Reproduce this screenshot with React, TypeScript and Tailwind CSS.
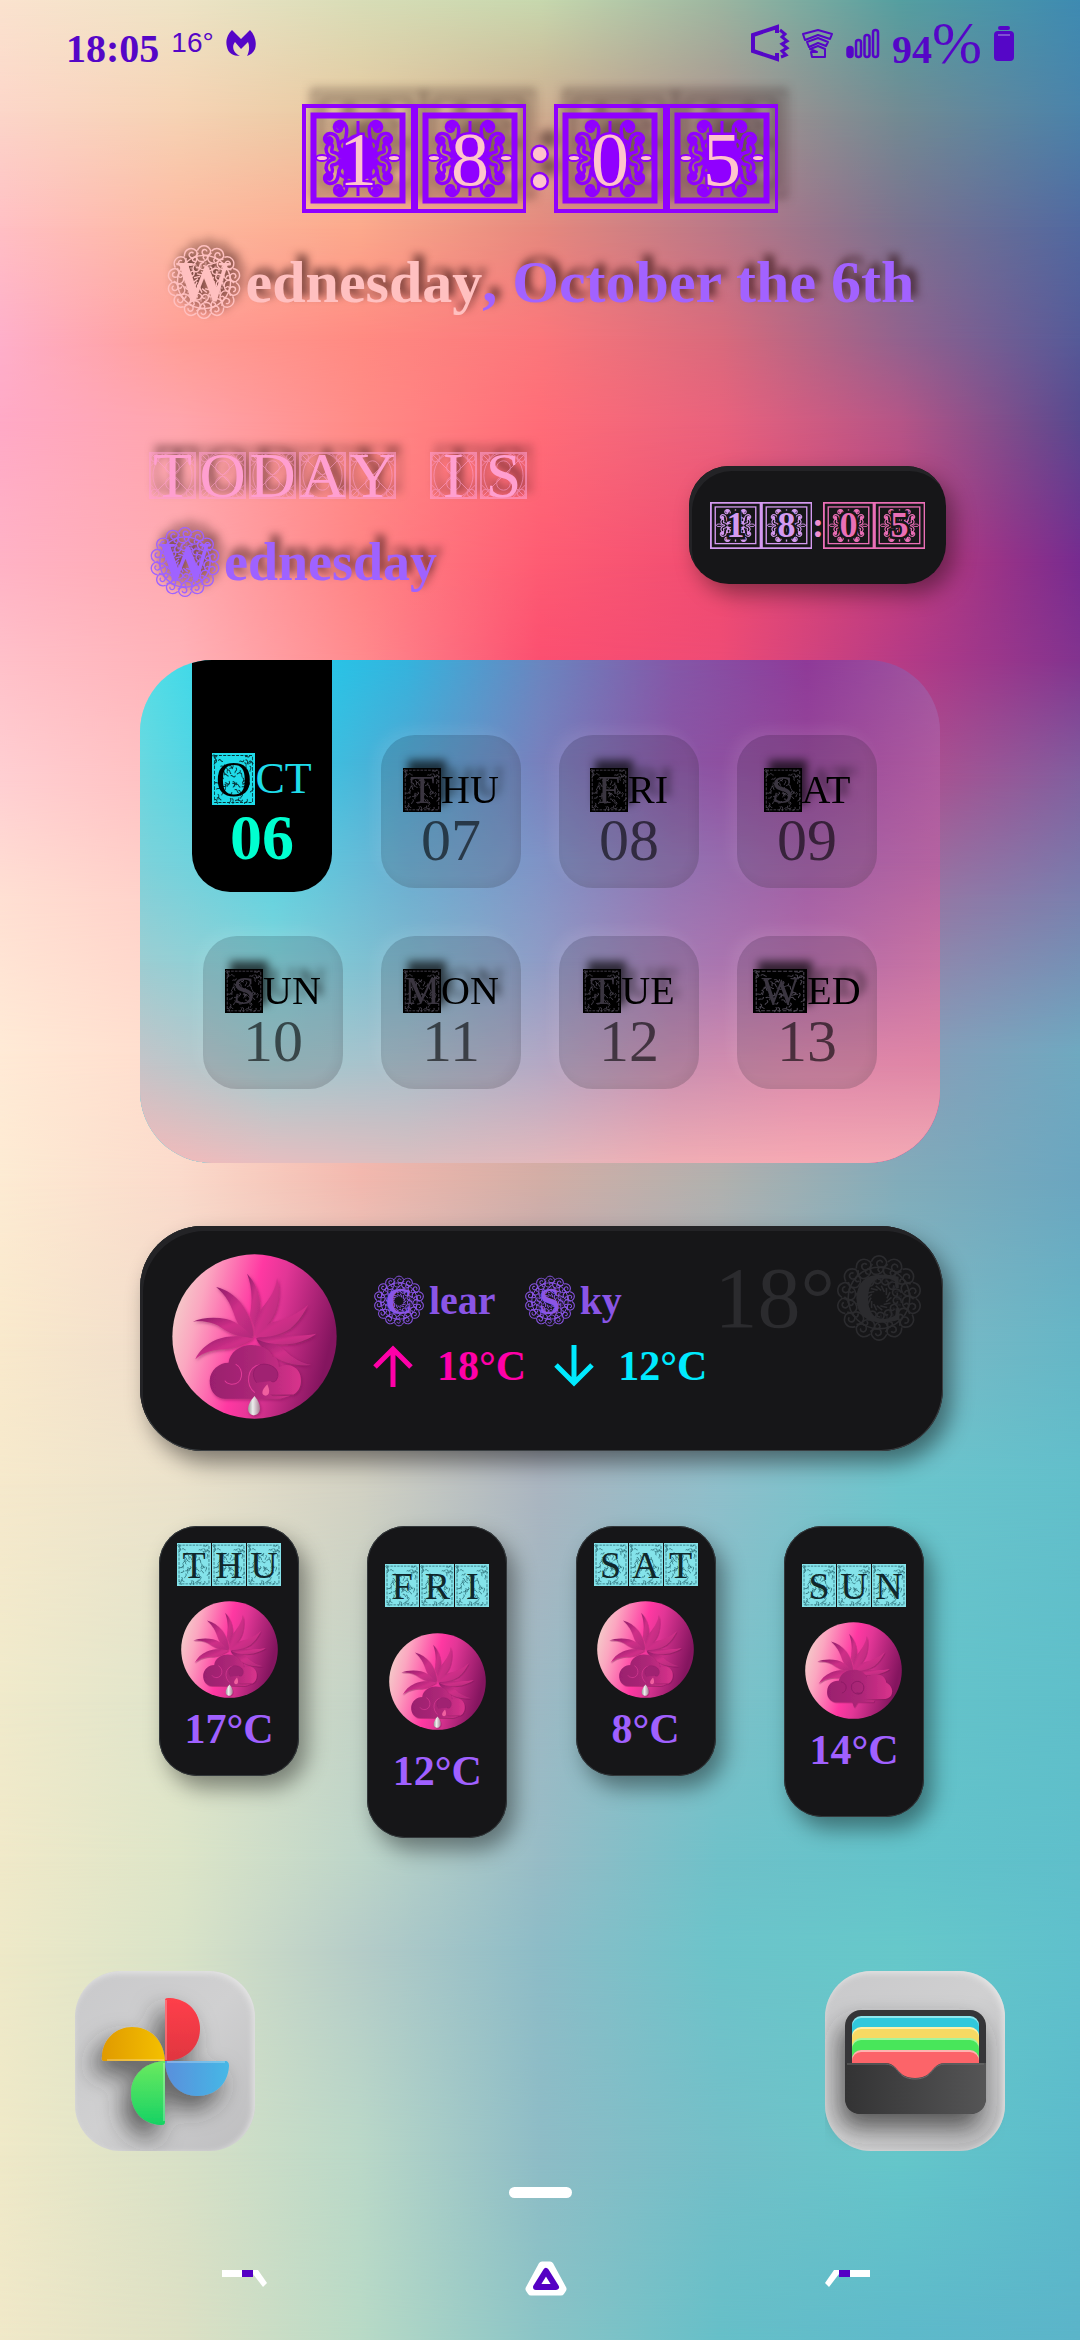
import { useId } from "react";
import type { ReactNode } from "react";

const SERIF = "font-['Liberation_Serif',serif]";

type Mesh = { stops: number[]; rows: string[] };

const wallpaper: Mesh = {
  stops: [0, 4.8, 9.7, 14.5, 18, 24, 28.2, 33.3, 38.5, 45, 50.4, 57.3, 63.2, 72.6, 79.5, 83.3, 91.9, 100],
  rows: [
    "#fbe3cf,#eee4c6,#d8ddb7,#c7d8ae,#9cb6a0,#559fa0,#3e8bb2",
    "#fcd6c9,#f6d3b4,#e6c9a0,#cfae90,#ad9590,#728b93,#4a83aa",
    "#ffbfc4,#fdb9a0,#fca98c,#e6897e,#bb7888,#7b728f,#5169a0",
    "#feafca,#ff9e96,#ff8a82,#fb777b,#d96a7c,#92628e,#555a98",
    "#ffa9c6,#ffa5ac,#ff8b86,#ff6d78,#e9627d,#b55587,#58498f",
    "#ffb2c5,#ffaab0,#ff8485,#fe5c73,#f04c72,#c23c7d,#772b90",
    "#ffc0c9,#ffb2b8,#ff8a8d,#fb4f70,#ee4b75,#b63b86,#82338f",
    "#ffcfd2,#ffbfc0,#ff9a9a,#e86080,#c84b80,#b0508f,#81609f",
    "#ffe0d3,#ffcfc8,#f9b0a8,#d88a95,#b57595,#9a76a3,#7a80ae",
    "#ffead6,#ffdccd,#f5b8b0,#d8a0a0,#b898a8,#8a9cb8,#6fa9c0",
    "#fdebd3,#fbdacb,#f2b8ae,#d3aea6,#b1b1ae,#82acba,#6ba6c0",
    "#f9e9cc,#f0dccb,#e2cdc5,#b5abb8,#9fafbd,#7db9c5,#66b6c6",
    "#f6e9cc,#ebe2cb,#d2d1c3,#abb5c0,#8fbfcb,#6cc5cc,#62bfcb",
    "#f0eacb,#dfe4cb,#c4d3c6,#9db9c4,#7dc1c9,#66c4ca,#5fbfca",
    "#f0e9c9,#dde5c8,#bdd5c9,#97bcc6,#6fc1c9,#63c3ca,#5fbfcb",
    "#eee9c8,#d9e3c8,#b5ccc8,#8dbcc7,#6cc4ca,#66c8ca,#5fc0cc",
    "#efe9c8,#d8e1c7,#bad8c8,#8ebcc6,#74bfc8,#65c7ca,#5cbbcb",
    "#f0e8c8,#dde0c4,#b8dac6,#8ac4c6,#66bfc8,#5eb9ca,#5bb4c9",
  ],
};

const cardMesh: Mesh = {
  stops: [0, 20, 40, 60, 80, 100],
  rows: [
    "#56dfe6,#1fd0ee,#34b4de,#6a86c0,#8458a8,#8f3a99,#a157a0",
    "#68d8e0,#30cfe8,#4fa8d3,#7880bd,#8a55a5,#954699,#ae5a9f",
    "#7dd2da,#5bd3e2,#6aaed2,#7f93c6,#9173b2,#a05ea5,#b463a0",
    "#9ccdd2,#80d3da,#7eb8ce,#8f9cc6,#a57bb4,#b26aa8,#c873a3",
    "#c4c4c8,#a3cbcf,#a9bfcb,#b3a8c4,#c98fb1,#dc88ab,#e085a5",
    "#f5b9b9,#e5bec0,#d9bec0,#e2b8bc,#f0adb4,#f6a9b3,#f2aab5",
  ],
};

/* Soft two-way gradient: each colour row fades in over the one above it. */
function MeshGradient({ mesh }: { mesh: Mesh }) {
  return (
    <div aria-hidden="true" className="absolute inset-0 -z-10 overflow-hidden">
      {mesh.rows.map((row, i) => {
        const mask =
          i === 0
            ? undefined
            : `linear-gradient(to bottom, transparent ${mesh.stops[i - 1]}%, black ${mesh.stops[i]}%)`;
        return (
          <div
            key={i}
            className="absolute inset-0"
            style={{ backgroundImage: `linear-gradient(to right, ${row})`, maskImage: mask }}
          />
        );
      })}
    </div>
  );
}

/* ---------- ornaments ---------- */

function Scrolls({ thin }: { thin: boolean }) {
  return (
    <g fill="none" stroke="currentColor" strokeLinecap="round" strokeWidth={thin ? 2.5 : 3.5}>
      <path d="M61 47C76 40 64 30 68 21C71 13 82 17 79 24C77 28 71 26 73 22" />
      <path d="M64 50C81 46 72 35 79 30C87 25 93 34 87 38C83 40 80 35 84 33" />
      <path d="M60 42C61 32 74 33 75 41C74 47 67 46 68 41" />
      <path d="M74 52C78 44 84 50 82 44C80 38 86 36 88 44C88 49 84 52 80 53" />
      <circle cx="74" cy="20" r="3" fill="currentColor" />
      <circle cx="85" cy="35" r="2" fill="currentColor" />
      <circle cx="72" cy="48" r="2" fill="currentColor" />
    </g>
  );
}

function DigitTile({ digit, mini = false }: { digit: string; mini?: boolean }) {
  return (
    <span
      className={
        mini
          ? "relative flex h-[47px] w-[51px] items-center justify-center"
          : "relative flex h-[109px] w-[112px] items-center justify-center"
      }
    >
      <svg viewBox="0 0 112 109" preserveAspectRatio="none" className="absolute inset-0 size-full" aria-hidden="true">
        <rect x="2" y="2" width="109" height="105" fill="none" stroke="currentColor" strokeWidth="4" />
        <rect x="11.500" y="11.500" width="89" height="85" fill="none" stroke="currentColor" strokeWidth={mini ? 3 : 6} />
        <g transform="translate(0 1)">
          <Scrolls thin={mini} />
          <g transform="matrix(-1 0 0 1 112 0)"><Scrolls thin={mini} /></g>
          <g transform="matrix(1 0 0 -1 0 107)"><Scrolls thin={mini} /></g>
          <g transform="matrix(-1 0 0 -1 112 107)"><Scrolls thin={mini} /></g>
          <path d="M56 16V91" stroke="currentColor" strokeWidth="3" />
          {!mini && <ellipse cx="56" cy="53" rx="17" ry="24" fill="currentColor" />}
          <ellipse cx="92" cy="53" rx="6" ry="3" fill={mini ? "none" : "#ffc4cc"} stroke="currentColor" strokeWidth="2" />
          <ellipse cx="20" cy="53" rx="6" ry="3" fill={mini ? "none" : "#ffc4cc"} stroke="currentColor" strokeWidth="2" />
        </g>
      </svg>
      <span
        className={
          mini
            ? "relative text-[36px] leading-none font-bold [-webkit-text-stroke:5px_#161618] [paint-order:stroke_fill]"
            : "relative text-[76px] leading-none text-[#ffc4cc] [-webkit-text-stroke:5px_#9000ff] [paint-order:stroke_fill]"
        }
      >
        {digit}
      </span>
    </span>
  );
}

function Medallion({ letter, size }: { letter: string; size: "sm" | "md" | "lg" | "ghost" }) {
  const box = {
    sm: "size-[52px] text-[38px]",
    md: "size-[72px] text-[54px]",
    lg: "size-[76px] text-[56px]",
    ghost: "size-[88px] text-[72px]",
  }[size];
  const petals = Array.from({ length: 14 }, (_, i) => (i * 360) / 14);
  return (
    <span className={`relative flex shrink-0 items-center justify-center ${box}`}>
      <svg viewBox="0 0 80 80" className="absolute inset-0 size-full" fill="none" stroke="currentColor" strokeWidth="1.500" aria-hidden="true">
        {petals.map((a) => (
          <g key={a} transform={`rotate(${a} 40 40)`}>
            <path d="M33 7C36 0 44 0 47 7C47 13 39 14 38 9C38 5 43 5 43 8" />
            <path d="M34 9C30 15 34 20 40 18C45 16 45 11 41 12C38 13 39 16 41 16" />
            <path d="M40 19C34 21 34 27 39 27C43 26 42 22 39 23M37 29L42 33" />
          </g>
        ))}
        <circle cx="40" cy="40" r="28" />
        <circle cx="40" cy="40" r="18" strokeDasharray="2 3" strokeWidth="6" opacity=".45" />
      </svg>
      <span className="relative leading-none font-bold">{letter}</span>
    </span>
  );
}

const specks = Array.from({ length: 54 }, (_, i) => ({
  x: 6 + ((i * 61.8) % 88),
  y: 6 + ((i * i * 7 + i * 29) % 89),
  t: (i * 47) % 180,
}));

/* A letter on a solid, speckled block. */
function BlockLetter({ children, className, letter, ink }: { children: ReactNode; className: string; letter: string; ink: string }) {
  return (
    <span className={`relative flex items-center justify-center ${className}`}>
      <svg viewBox="0 0 100 100" preserveAspectRatio="none" className="absolute inset-0 size-full" aria-hidden="true">
        <rect width="100" height="100" fill="currentColor" />
        <rect x="6" y="5" width="88" height="90" fill="none" stroke={ink} strokeWidth="2" strokeDasharray="7 3" />
        {specks.map((s, i) => (
          <path
            key={i}
            d="M-5 0Q-2 -4 1 -1T6 1"
            transform={`translate(${s.x} ${s.y}) rotate(${s.t})`}
            fill="none"
            stroke={ink}
            strokeWidth="2"
          />
        ))}
      </svg>
      <span className={`relative leading-none ${letter}`}>{children}</span>
    </span>
  );
}

function GridLetter({ children }: { children: string }) {
  return (
    <span className="relative flex size-[47px] items-center justify-center">
      <svg viewBox="0 0 48 48" className="absolute inset-0 size-full opacity-60" fill="none" stroke="currentColor" aria-hidden="true">
        <rect x="1" y="1" width="46" height="46" strokeWidth="2" />
        <path d="M1 1L47 47M47 1L1 47M15 1L1 15M33 1L47 15M1 33L15 47M47 33L33 47" />
        <ellipse cx="24" cy="24" rx="20" ry="23" />
        <circle cx="24" cy="16" r="7" />
        <circle cx="24" cy="32" r="7" />
        <circle cx="6" cy="6" r="4" />
        <circle cx="42" cy="6" r="4" />
        <circle cx="6" cy="42" r="4" />
        <circle cx="42" cy="42" r="4" />
      </svg>
      <span className="relative text-[64px] leading-[47px]">{children}</span>
    </span>
  );
}

/* ---------- weather art ---------- */

const petals = [
  "M452 372C420 365 395 350 375 330C350 308 320 295 290 296C300 320 330 345 365 360C395 373 425 376 452 372Z",
  "M467 280C430 288 390 285 350 285C325 285 300 288 288 294C320 312 370 315 405 308C435 300 452 292 467 280Z",
  "M443 194C420 215 385 235 350 243C315 250 295 270 288 290C320 292 360 285 390 265C415 245 430 220 443 194Z",
  "M262 102C275 135 280 175 270 225L285 262C308 220 308 150 262 102Z",
  "M351 114C348 145 330 175 305 205C288 230 280 255 285 288C310 270 340 240 350 200C358 170 358 140 351 114Z",
  "M170 141C200 165 215 195 228 235C240 265 260 280 280 288C282 260 270 225 245 190C225 165 200 148 170 141Z",
  "M101 244C130 240 165 245 190 265C220 285 250 292 280 292C260 268 235 245 200 236C165 229 125 232 101 244Z",
  "M108 356C130 335 165 325 200 325C230 322 255 308 280 294C250 285 205 283 170 298C140 312 120 330 108 356Z",
];

function WeatherArt({ className, dry = false }: { className: string; dry?: boolean }) {
  const id = useId();
  return (
    <svg viewBox="39 43 490 490" className={className} role="img" aria-label={dry ? "Cloudy sun" : "Sun with rain cloud"}>
      <defs>
        <linearGradient id={`${id}b`} x1="0" y1=".35" x2="1" y2=".6">
          <stop offset="0" stopColor="#f4cbc9" />
          <stop offset=".15" stopColor="#fba6c0" />
          <stop offset=".45" stopColor="#ff38a2" />
          <stop offset=".6" stopColor="#e23696" />
          <stop offset=".95" stopColor="#84155f" />
        </linearGradient>
        <linearGradient id={`${id}p`} x1="0" y1="0" x2="1" y2="1">
          <stop offset="0" stopColor="#8d1c68" />
          <stop offset=".5" stopColor="#cf2f88" />
          <stop offset="1" stopColor="#b02a7a" />
        </linearGradient>
        <linearGradient id={`${id}c`}>
          <stop offset="0" stopColor="#9a1f6e" />
          <stop offset=".5" stopColor="#ab2677" />
          <stop offset="1" stopColor="#d9328c" />
        </linearGradient>
        <linearGradient id={`${id}d`}>
          <stop offset="0" stopColor="#9a9a9a" />
          <stop offset=".4" stopColor="#eeeeee" />
          <stop offset="1" stopColor="#a77f95" />
        </linearGradient>
        <filter id={`${id}s`} x="-10%" y="-10%" width="125%" height="125%">
          <feDropShadow dx="3" dy="4" stdDeviation="4" floodColor="#6d0f4c" floodOpacity=".5" />
        </filter>
      </defs>
      <circle cx="284" cy="288" r="244" fill={`url(#${id}b)`} />
      <g fill={`url(#${id}p)`} filter={`url(#${id}s)`}>
        {petals.map((d) => <path key={d} d={d} />)}
      </g>
      {dry ? (
        <g filter={`url(#${id}s)`}>
          <path fill={`url(#${id}c)`} d="M190 448C160 440 148 415 151 390C155 355 180 338 210 340C218 300 255 282 290 284C325 286 345 305 350 325C395 290 445 310 450 350C490 370 490 425 445 432L330 434L390 440L385 448H305L288 476L278 448Z" />
          <path d="M220 345C255 350 255 395 225 402M330 400C300 420 265 395 275 360C290 335 325 338 335 365C342 395 318 410 300 400" fill="none" stroke="#871862" strokeWidth="4" />
        </g>
      ) : (
        <g filter={`url(#${id}s)`}>
          <path fill={`url(#${id}c)`} d="M195 473C165 470 150 445 151 418C153 388 178 366 207 366C210 335 240 313 275 313C305 314 330 325 338 348C350 346 356 365 356 380C375 366 408 372 418 398C428 425 418 452 400 460H330L340 466L390 464L360 473Z" />
          <path d="M228 370C256 385 250 432 215 430C205 428 198 424 196 419M300 372C262 378 255 430 285 455" fill="none" stroke="#e03b98" strokeWidth="3" />
          <path d="M290 425C270 400 285 368 315 370C345 372 362 395 350 415C346 424 338 424 332 420" fill="#a02272" stroke="#8c1b65" strokeWidth="2" />
          <path d="M322 430C304 448 303 462 317 464C330 462 330 448 322 430Z" fill="#f05f9f" />
          <path d="M284 465C258 495 260 518 281 522C305 520 307 492 284 465Z" fill={`url(#${id}d)`} />
        </g>
      )}
    </svg>
  );
}

/* ---------- status bar ---------- */

function StatusBar() {
  return (
    <header className="flex h-[86px] items-center justify-between px-[66px] text-[#5506c7]">
      <div className="flex items-center gap-3">
        <span className="pt-[12px] text-[40px] leading-none font-bold">18:05</span>
        <span className="font-['Liberation_Sans',sans-serif] text-[28px] leading-none">16°</span>
        <svg viewBox="0 0 30 27" className="h-[27px] w-[30px]" fill="currentColor" aria-hidden="true">
          <path d="M6 0L15 9L24 0C29 5 31 13 29 19C27 23 24 25 21 26C23 22 24 17 22 12L15 19L9 12C5 17 8 23 14 26C7 26 2 23 1 17C-1 10 2 4 6 0Z" />
        </svg>
      </div>
      <div className="flex items-center gap-3">
        <svg viewBox="0 0 40 38" className="h-[38px] w-[40px]" fill="none" stroke="currentColor" strokeWidth="4" aria-hidden="true">
          <path d="M27 9V3L3 11V27L27 35V29" />
          <path d="M30 6L35 10L32 13L37 17L32 20L37 24L32 27L36 31L31 33" strokeWidth="3" />
        </svg>
        <svg viewBox="0 0 32 30" className="h-[30px] w-[32px]" fill="none" stroke="currentColor" strokeWidth="2" strokeLinejoin="round" aria-hidden="true">
          <path d="M3 12L1 6L16 2L30 6L28 11L16 7Z" />
          <path d="M7 19L5 14L16 10L26 14L24 18L16 15Z" />
          <path d="M10 29L9 24H15L8 21L16 18L23 21V29Z" />
        </svg>
        <svg viewBox="0 0 34 31" className="h-[31px] w-[34px]" fill="none" stroke="currentColor" strokeWidth="2.500" aria-hidden="true">
          <rect x="1.500" y="19" width="5" height="10" rx="2.500" fill="currentColor" />
          <rect x="10" y="12" width="5" height="17" rx="2.500" />
          <rect x="18.500" y="7" width="5" height="22" rx="2.500" />
          <rect x="27" y="2" width="5" height="27" rx="2.500" />
        </svg>
        <span className="flex items-baseline">
          <span className="text-[40px] leading-none font-bold">94</span>
          <span className="text-[60px] leading-none">%</span>
        </span>
        <svg viewBox="0 0 20 35" className="h-[35px] w-[20px]" fill="currentColor" aria-hidden="true">
          <rect x="4" width="12" height="4" rx="2" />
          <rect y="5" width="20" height="30" rx="4" />
          <path d="M4 9H16" stroke="#a999dd" />
        </svg>
      </div>
    </header>
  );
}

/* ---------- calendar ---------- */

const days = [
  ["T", "HU", "07"],
  ["F", "RI", "08"],
  ["S", "AT", "09"],
  ["S", "UN", "10"],
  ["M", "ON", "11"],
  ["T", "UE", "12"],
  ["W", "ED", "13"],
];

function DayTile({ day }: { day: string[] }) {
  return (
    <li className="flex h-[153px] flex-col items-center rounded-[34px] bg-[#3a3a44]/18 pt-[33px] shadow-[-6px_-6px_14px_rgba(255,255,255,0.08),inset_-4px_-4px_10px_rgba(0,0,0,0.05)]">
      <span className="flex h-[44px] items-center text-black drop-shadow-[5px_-8px_4px_rgba(0,0,0,0.65)]">
        <BlockLetter className={day[0] === "W" ? "h-[44px] w-[54px]" : "h-[44px] w-[38px]"} letter="text-[40px] text-[#3a3540]" ink="#4b4652">
          {day[0]}
        </BlockLetter>
        <span className="text-[40px] leading-none">{day[1]}</span>
      </span>
      <span className="mt-1 text-[60px] leading-[48px] text-black/60">{day[2]}</span>
    </li>
  );
}

function Calendar() {
  return (
    <section className="relative isolate mx-[140px] mt-[62px] overflow-hidden rounded-[72px] pb-[74px]">
      <MeshGradient mesh={cardMesh} />
      <ul className="grid grid-cols-4 gap-x-[38px] gap-y-[48px] px-[63px] pt-[75px]">
        <li className="-mt-[75px] -mb-1 -ml-[11px] flex w-[140px] flex-col items-center rounded-b-[38px] bg-black pt-[93px]">
          <span className="flex h-[52px] items-center text-[#1fdcea]">
            <BlockLetter className="h-[52px] w-[43px]" letter="text-[50px] text-black" ink="#06353a">O</BlockLetter>
            <span className="text-[44px] leading-none">CT</span>
          </span>
          <span className="mt-[8px] text-[64px] leading-[50px] font-bold text-[#00ffd0]">06</span>
        </li>
        {days.map((d) => <DayTile key={d[2]} day={d} />)}
      </ul>
    </section>
  );
}

/* ---------- weather ---------- */

function CurrentWeather() {
  return (
    <section className="mt-[63px] mr-[137px] ml-[140px] flex h-[225px] items-start rounded-[62px] bg-[#161618] pt-[28px] pr-[20px] pl-[32px] shadow-[8px_12px_22px_rgba(0,0,0,0.45),inset_3px_5px_0_#232326,inset_0_0_0_1px_#3a3f42]">
      <WeatherArt className="size-[165px] shrink-0" />
      <div className="ml-[36px] flex flex-col pt-[20px]">
        <h2 className="flex h-[54px] items-center gap-[28px] text-[40px] leading-none font-bold text-[#8a55e6]">
          <span className="flex items-center gap-1"><Medallion letter="C" size="sm" />lear</span>
          <span className="flex items-center gap-1"><Medallion letter="S" size="sm" />ky</span>
        </h2>
        <p className="mt-[12px] flex h-[52px] items-center text-[42px] leading-none font-bold">
          <svg viewBox="0 0 40 42" className="h-[42px] w-[40px]" fill="none" stroke="#ff00a8" strokeWidth="5" aria-label="High" role="img">
            <path d="M20 42V4M2 22L20 4L38 22" />
          </svg>
          <span className="ml-6 text-[#ff00a8]">18°C</span>
          <svg viewBox="0 0 40 42" className="ml-7 h-[42px] w-[40px]" fill="none" stroke="#00eaff" strokeWidth="5" aria-label="Low" role="img">
            <path d="M20 0V38M2 20L20 38L38 20" />
          </svg>
          <span className="ml-6 text-[#00eaff]">12°C</span>
        </p>
      </div>
      <p className="-ml-[16px] flex flex-1 items-center justify-end text-[86px] leading-[88px] text-[#2b2b2e]">
        18°<Medallion letter="C" size="ghost" />
      </p>
    </section>
  );
}

const forecast = [
  { day: "THU", temp: "17°C", pad: "pt-[17px] pb-[22px]", art: "mt-[15px]", text: "mt-[6px]", dry: false },
  { day: "FRI", temp: "12°C", pad: "pt-[38px] pb-[42px]", art: "mt-[26px]", text: "mt-[16px]", dry: false },
  { day: "SAT", temp: "8°C", pad: "pt-[17px] pb-[22px]", art: "mt-[15px]", text: "mt-[6px]", dry: false },
  { day: "SUN", temp: "14°C", pad: "pt-[38px] pb-[42px]", art: "mt-[15px]", text: "mt-[6px]", dry: true },
];

function Forecast() {
  return (
    <ul className="mt-[75px] mr-[156px] ml-[159px] flex h-[311px] items-start justify-between">
      {forecast.map((f) => (
        <li
          key={f.day}
          className={`flex w-[140px] flex-col items-center rounded-[38px] bg-[#161618] shadow-[8px_12px_22px_rgba(0,0,0,0.42),inset_0_0_0_1px_#33383b] ${f.pad}`}
        >
          <span className="flex gap-px text-[#84e3ea]">
            {f.day.split("").map((c) => (
              <BlockLetter key={c} className="h-[43px] w-[34px]" letter="text-[38px] text-[#10282c]" ink="#2d6f78">{c}</BlockLetter>
            ))}
          </span>
          <WeatherArt className={`size-[97px] ${f.art}`} dry={f.dry} />
          <span className={`text-[42px] leading-[50px] font-bold text-[#a060ff] ${f.text}`}>{f.temp}</span>
        </li>
      ))}
    </ul>
  );
}

/* ---------- dock ---------- */

const dockButton =
  "size-[180px] rounded-[46px] bg-linear-to-br from-[#c9c9cb] via-[#d0d0d1] to-[#bdbdbf] shadow-[inset_-2px_2px_6px_#e6e6e6]";

function PhotosIcon() {
  return (
    <svg viewBox="0 0 180 180" className="size-full" aria-hidden="true">
      <defs>
        <linearGradient id="ph-y"><stop stopColor="#e09a00" /><stop offset="1" stopColor="#f4c000" /></linearGradient>
        <linearGradient id="ph-b"><stop stopColor="#5a8fdc" /><stop offset="1" stopColor="#45b8e6" /></linearGradient>
        <linearGradient id="ph-g" x1="0" y1="1" x2="0" y2="0"><stop stopColor="#16d264" /><stop offset="1" stopColor="#6bea60" /></linearGradient>
        <linearGradient id="ph-r" x1="0" y1="1" x2="0" y2="0"><stop stopColor="#e03540" /><stop offset="1" stopColor="#ff3f4a" /></linearGradient>
        <filter id="ph-s" x="-40%" y="-40%" width="180%" height="180%">
          <feDropShadow dx="-8" dy="13" stdDeviation="12" floodColor="#303030" floodOpacity=".75" />
        </filter>
      </defs>
      <g filter="url(#ph-s)">
        <path fill="url(#ph-y)" d="M29 90C26 90 27 87 27 85C28 68 41 56 57 56C76 56 89 70 90 90Z" />
        <path fill="url(#ph-g)" d="M90 151C90 154 88 154 85 154C68 153 56 140 56 122C56 104 70 91 90 90Z" />
        <path fill="url(#ph-b)" d="M90 90H150C153 90 154 92 154 95C153 113 140 125 122 125C104 125 91 111 90 90Z" />
        <path fill="url(#ph-r)" d="M90 29C90 27 92 27 95 27C113 28 125 41 125 58C125 76 111 90 90 90Z" />
      </g>
      <path d="M91 89V29M32 89H89M89 92V150M92 91H150" stroke="#ffffff" strokeOpacity=".25" strokeWidth="2" />
    </svg>
  );
}

function WalletIcon() {
  return (
    <svg viewBox="0 0 180 180" className="size-full" aria-hidden="true">
      <defs>
        <linearGradient id="wa-p"><stop stopColor="#333334" /><stop offset="1" stopColor="#555556" /></linearGradient>
        <filter id="wa-s" x="-30%" y="-30%" width="160%" height="170%">
          <feDropShadow dx="-5" dy="14" stdDeviation="12" floodColor="#303030" floodOpacity=".75" />
        </filter>
      </defs>
      <rect x="20" y="39" width="141" height="104" rx="16" fill="#363637" filter="url(#wa-s)" />
      <rect x="27" y="45" width="127" height="40" rx="9" fill="#8fe6ee" />
      <rect x="27" y="47" width="127" height="40" rx="9" fill="#31c8dc" />
      <rect x="27" y="56" width="127" height="36" rx="9" fill="#fff0a8" />
      <rect x="27" y="58" width="127" height="36" rx="9" fill="#f7d963" />
      <rect x="27" y="67" width="127" height="36" rx="9" fill="#a6f5a0" />
      <rect x="27" y="69" width="127" height="36" rx="9" fill="#48e65a" />
      <rect x="27" y="79" width="127" height="36" rx="9" fill="#ffb3b0" />
      <rect x="27" y="81" width="127" height="36" rx="9" fill="#fc6469" />
      <path fill="url(#wa-p)" d="M20 92H60C70 92 72 100 78 104C84 108 96 108 102 104C108 100 110 92 120 92H161V127C161 137 155 143 145 143H36C26 143 20 137 20 127Z" />
      <path d="M22 93H60C70 93 72 101 78 105C84 109 96 109 102 105C108 101 110 93 120 93H159" fill="none" stroke="#6a6a6b" />
    </svg>
  );
}

function NavCorner({ className = "" }: { className?: string }) {
  return (
    <svg viewBox="0 0 46 18" className={`h-[18px] w-[46px] ${className}`} aria-hidden="true">
      <path d="M0 0H20V7H0Z" fill="#fff" />
      <path d="M20 0H31V7H20Z" fill="#5500c4" />
      <path d="M31 0H36L45 13L41 17L31 4Z" fill="#fff" />
    </svg>
  );
}

export default function App() {
  return (
    <main className={`relative isolate flex min-h-screen flex-col ${SERIF}`}>
      <MeshGradient mesh={wallpaper} />
      <StatusBar />

      <time className="mt-[18px] flex items-center justify-center text-[#9000ff] drop-shadow-[9px_-15px_5px_rgba(40,20,20,0.5)]">
        <DigitTile digit="1" />
        <DigitTile digit="8" />
        <span className="flex w-7 justify-center text-[84px] leading-[100px] font-bold text-[#ffc4cc] [-webkit-text-stroke:5px_#9000ff] [paint-order:stroke_fill]">
          :
        </span>
        <DigitTile digit="0" />
        <DigitTile digit="5" />
      </time>

      <h1 className="mt-[30px] flex h-[77px] items-center justify-center text-[60px] leading-none font-bold whitespace-pre text-[#a262ff] drop-shadow-[5px_-6px_4px_rgba(40,10,10,0.7)]">
        <span className="flex items-center gap-1 text-[#ffc0c0]"><Medallion letter="W" size="lg" />ednesday</span>
        , October the 6th
      </h1>

      <section className="mt-[132px] flex items-center justify-between pr-[134px] pl-[149px]">
        <div>
          <p className="flex gap-[34px] text-[#ff9fd0] drop-shadow-[5px_-7px_4px_rgba(40,10,10,0.6)]">
            <span className="flex gap-[3px]">{"TODAY".split("").map((c) => <GridLetter key={c}>{c}</GridLetter>)}</span>
            <span className="flex gap-[3px]">{"IS".split("").map((c) => <GridLetter key={c}>{c}</GridLetter>)}</span>
          </p>
          <p className="mt-[27px] flex h-[72px] items-center gap-[3px] text-[54px] leading-none font-bold text-[#9f62ff] drop-shadow-[5px_-7px_4px_rgba(40,10,10,0.65)]">
            <Medallion letter="W" size="md" />ednesday
          </p>
        </div>
        <time className="flex h-[118px] w-[257px] items-center justify-center rounded-[40px] bg-[#161618] shadow-[8px_10px_22px_rgba(0,0,0,0.4),inset_3px_5px_0_#232326]">
          <span className="flex text-[#d49af0]"><DigitTile digit="1" mini /><DigitTile digit="8" mini /></span>
          <span className="w-[11px] text-center text-[36px] leading-none font-bold text-[#f08fd0]">:</span>
          <span className="flex text-[#ea6fb6]"><DigitTile digit="0" mini /><DigitTile digit="5" mini /></span>
        </time>
      </section>

      <Calendar />
      <CurrentWeather />
      <Forecast />

      <div className="mt-[134px] flex justify-between px-[75px]">
        <button type="button" aria-label="Photos" className={dockButton}><PhotosIcon /></button>
        <button type="button" aria-label="Wallet" className={dockButton}><WalletIcon /></button>
      </div>
      <div className="mx-auto mt-[36px] h-[11px] w-[63px] rounded-full bg-white" />
      <nav className="mt-[63px] flex items-center justify-between pr-[210px] pb-[43px] pl-[222px]">
        <button type="button" aria-label="Recent apps"><NavCorner /></button>
        <button type="button" aria-label="Home">
          <svg viewBox="0 0 42 35" className="h-[35px] w-[42px]" strokeLinejoin="round" aria-hidden="true">
            <path d="M17 4H25L38 28L36 31H6L4 28Z" fill="#fff" stroke="#fff" strokeWidth="7" />
            <path d="M21 10L31 26H11Z" fill="#fff" stroke="#5500c4" strokeWidth="6" />
          </svg>
        </button>
        <button type="button" aria-label="Back"><NavCorner className="-scale-x-100" /></button>
      </nav>
    </main>
  );
}
